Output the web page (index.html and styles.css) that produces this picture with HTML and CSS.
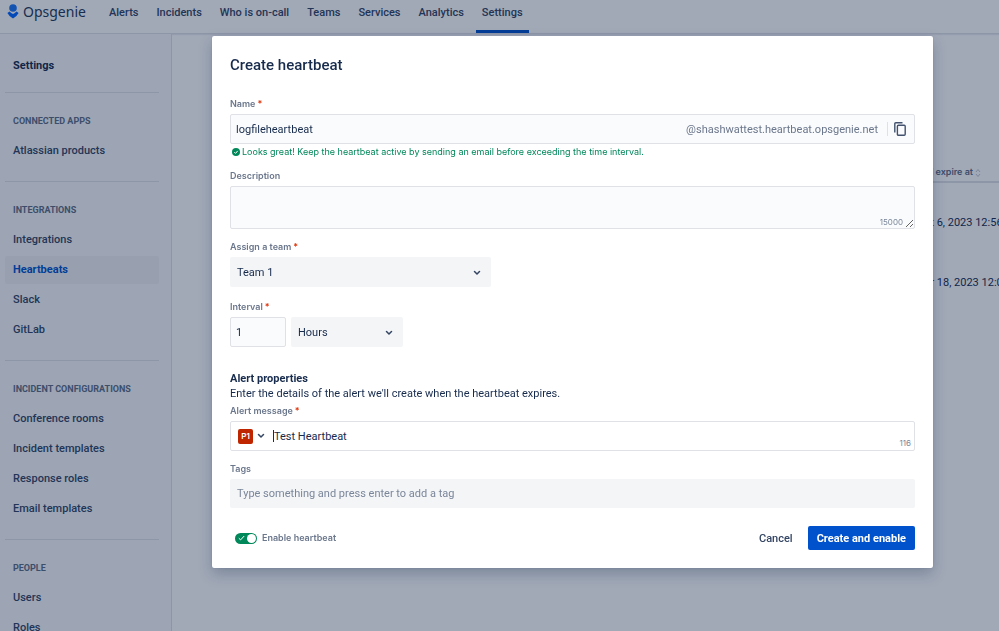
FILE: index.html
```
<!DOCTYPE html>
<html lang="en">
<head>
    <meta charset="UTF-8">
    <meta name="viewport" content="width=device-width, initial-scale=1.0">
    <title>Heartbeats - Opsgenie</title>
    <link rel="stylesheet" href="styles.css">
</head>
<body>
    <header class="topbar">
        <a href="#" class="brand">
            <svg class="brand-icon" viewBox="0 0 12 15" aria-hidden="true">
                <circle cx="6" cy="4" r="3.8" fill="#1d74f5"/>
                <path d="M.4 9 2.600 7.600Q4 9.400 6 10Q8 9.400 9.400 7.600L11.600 9Q9.800 12.600 6 14.400Q2.200 12.600 .4 9Z" fill="#0065ff"/>
            </svg>
            <span>Opsgenie</span>
        </a>
        <nav class="main-nav">
            <a href="#">Alerts</a>
            <a href="#">Incidents</a>
            <a href="#">Who is on-call</a>
            <a href="#">Teams</a>
            <a href="#">Services</a>
            <a href="#">Analytics</a>
            <a href="#" class="active">Settings</a>
        </nav>
    </header>

    <div class="page">
        <aside class="sidebar">
            <h2 class="sidebar-title">Settings</h2>
            <section class="side-section">
                <h3>Connected apps</h3>
                <a href="#">Atlassian products</a>
            </section>
            <section class="side-section">
                <h3>Integrations</h3>
                <a href="#">Integrations</a>
                <a href="#" class="active">Heartbeats</a>
                <a href="#">Slack</a>
                <a href="#">GitLab</a>
            </section>
            <section class="side-section">
                <h3>Incident configurations</h3>
                <a href="#">Conference rooms</a>
                <a href="#">Incident templates</a>
                <a href="#">Response roles</a>
                <a href="#">Email templates</a>
            </section>
            <section class="side-section">
                <h3>People</h3>
                <a href="#">Users</a>
                <a href="#">Roles</a>
            </section>
        </aside>

        <main class="content">
            <table class="heartbeats">
                <thead>
                    <tr>
                        <td class="spacer"></td>
                        <th>Will expire at
                            <svg class="sort-icon" viewBox="0 0 6 10" aria-hidden="true">
                                <path d="M1 4 3 1.500 5 4M1 6 3 8.500 5 6"/>
                            </svg>
                        </th>
                    </tr>
                </thead>
                <tbody>
                    <tr><td></td><td>Oct 6, 2023 12:56</td></tr>
                    <tr><td></td><td>Apr 18, 2023 12:00</td></tr>
                </tbody>
            </table>
        </main>
    </div>

    <div class="blanket">
        <form class="modal" role="dialog" aria-labelledby="modal-title">
            <h1 id="modal-title">Create heartbeat</h1>

            <div class="field">
                <label for="name">Name<span class="required">*</span></label>
                <div class="input-box">
                    <input type="text" id="name" value="logfileheartbeat">
                    <span class="suffix">@shashwattest.heartbeat.opsgenie.net</span>
                    <button type="button" class="copy" aria-label="Copy">
                        <svg viewBox="0 0 12 14" aria-hidden="true">
                            <path d="M.8 10.500V1.800Q.8.800 1.800.800H8.500"/>
                            <rect x="3.400" y="3.300" width="7.800" height="9.900" rx="1"/>
                        </svg>
                    </button>
                </div>
                <p class="success">
                    <svg viewBox="0 0 8 8" aria-hidden="true">
                        <circle cx="4" cy="4" r="4" fill="#00875a"/>
                        <path d="M2.300 4.200 3.500 5.400 5.700 2.900" fill="none" stroke="#fff"/>
                    </svg>
                    Looks great! Keep the heartbeat active by sending an email before exceeding the time interval.
                </p>
            </div>

            <div class="field">
                <label for="description">Description</label>
                <div class="textarea-box">
                    <textarea id="description"></textarea>
                    <span class="counter">15000</span>
                </div>
            </div>

            <div class="field field-spaced">
                <label for="team">Assign a team<span class="required">*</span></label>
                <div class="select-box team">
                    <select id="team"><option>Team 1</option></select>
                    <svg class="chevron" viewBox="0 0 8 6" aria-hidden="true"><path d="M1.500 1.500 4 4 6.500 1.500"/></svg>
                </div>
            </div>

            <div class="field">
                <label for="interval">Interval<span class="required">*</span></label>
                <div class="interval">
                    <div class="input-box interval-value">
                        <input type="text" id="interval" inputmode="numeric" value="1">
                    </div>
                    <div class="select-box unit">
                        <select aria-label="Interval unit"><option>Hours</option></select>
                        <svg class="chevron" viewBox="0 0 8 6" aria-hidden="true"><path d="M1.500 1.500 4 4 6.500 1.500"/></svg>
                    </div>
                </div>
            </div>

            <div class="alert-intro">
                <h2>Alert properties</h2>
                <p>Enter the details of the alert we'll create when the heartbeat expires.</p>
            </div>

            <div class="field">
                <label for="message">Alert message<span class="required">*</span></label>
                <div class="input-box message">
                    <button type="button" class="priority">
                        <span class="badge">P1</span>
                        <svg class="arrow" viewBox="0 0 8 6" aria-hidden="true"><path d="M1.500 1.500 4 4 6.500 1.500"/></svg>
                    </button>
                    <span class="caret"></span>
                    <input type="text" id="message" value="Test Heartbeat">
                    <span class="counter">116</span>
                </div>
            </div>

            <div class="field">
                <label for="tags">Tags</label>
                <input type="text" id="tags" class="tags" placeholder="Type something and press enter to add a tag">
            </div>

            <footer class="modal-footer">
                <div class="toggle">
                    <input type="checkbox" id="enable" checked>
                    <svg viewBox="0 0 7 6" aria-hidden="true"><path d="M.8 3.200 2.600 4.900 6.200 1"/></svg>
                    <label for="enable">Enable heartbeat</label>
                </div>
                <button type="button" class="btn">Cancel</button>
                <button type="submit" class="btn btn-primary">Create and enable</button>
            </footer>
        </form>
    </div>
</body>
</html>
```

FILE: styles.css
```
* {
    margin: 0;
    padding: 0;
    box-sizing: border-box;
}

body {
    height: 100vh;
    display: flex;
    flex-direction: column;
    overflow: hidden;
    background: #fff;
    color: #172b4d;
    font-family: Roboto, "Liberation Sans", sans-serif;
    font-size: 11px;
    line-height: 15px;
}

a {
    color: inherit;
    text-decoration: none;
}

input,
textarea,
select,
button {
    font: inherit;
    color: inherit;
    background: none;
    border: none;
    outline: none;
}

/* top bar */
.topbar {
    flex: none;
    display: flex;
    height: 34px;
    border-bottom: 1px solid #dfe1e6;
    box-shadow: 0 1px 1px #ebecf0;
    line-height: 26px;
    font-weight: 500;
    color: #344563;
}

.brand {
    display: flex;
    width: 103px;
    padding-left: 7px;
    gap: 4px;
    font-family: "Noto Sans", sans-serif;
    font-size: 14px;
    line-height: 24px;
    font-weight: 400;
    color: #253858;
}

.brand-icon {
    width: 12px;
    height: 15px;
    margin-top: 4px;
}

.main-nav {
    display: flex;
    gap: 6px;
}

.main-nav a {
    padding: 0 6px;
    white-space: nowrap;
}

.main-nav .active {
    border-bottom: 3px solid #0052cc;
}

/* sidebar */
.page {
    flex: 1;
    display: flex;
    min-height: 0;
}

.sidebar {
    flex: none;
    width: 172px;
    padding: 24px 12px 0 5px;
    background: #f8f9fb;
    border-right: 1px solid #dfe1e6;
    overflow: hidden;
}

.sidebar-title {
    padding: 0 8px;
    margin-bottom: 19px;
    font-size: 11px;
    font-weight: 700;
}

.side-section {
    border-top: 1px solid #dfe1e6;
    padding: 21px 0 14px;
}

.side-section h3 {
    padding: 0 8px;
    margin-bottom: 9px;
    font-size: 9px;
    line-height: 14px;
    font-weight: 700;
    text-transform: uppercase;
    color: #5e6c84;
}

.side-section a {
    display: block;
    padding: 0 8px;
    margin-bottom: 2px;
    line-height: 28px;
    border-radius: 2px;
    font-weight: 500;
    color: #344563;
}

.side-section .active {
    background: #f0f1f4;
    color: #0052cc;
    font-weight: 700;
}

/* heartbeat list */
.content {
    flex: 1;
    min-width: 0;
    overflow: hidden;
    padding: 128px 0 0 60px;
}

.heartbeats {
    border-collapse: collapse;
    white-space: nowrap;
}

.heartbeats .spacer {
    width: 685px;
    min-width: 685px;
}

.heartbeats thead {
    border-bottom: 2px solid #dfe1e6;
}

.heartbeats th {
    height: 20px;
    font-family: Inter, sans-serif;
    font-size: 9px;
    font-weight: 600;
    text-align: left;
    color: #5e6c84;
}

.heartbeats tbody td {
    height: 60px;
    padding-top: 20px;
}

.sort-icon {
    width: 6px;
    height: 10px;
    vertical-align: middle;
    fill: none;
    stroke: #c1c7d0;
}

/* modal */
.blanket {
    position: fixed;
    inset: 0;
    display: flex;
    align-items: flex-start;
    padding: 36px 66px 0 212px;
    background: rgba(9, 30, 66, 0.38);
}

.modal {
    flex: 1;
    min-width: 0;
    padding: 18px;
    background: #fff;
    border-radius: 2px;
    box-shadow: 0 0 1px rgba(9, 30, 66, 0.3), 0 6px 14px rgba(9, 30, 66, 0.25);
}

.modal h1 {
    margin-bottom: 22px;
    font-size: 15px;
    line-height: 22px;
    font-weight: 500;
}

.field {
    margin-bottom: 12px;
}

.field-spaced {
    margin-bottom: 14px;
}

.field label,
.toggle label {
    display: block;
    font-family: Inter, sans-serif;
    font-size: 9px;
    line-height: 12px;
    font-weight: 600;
    color: #6b778c;
}

.field label {
    margin-bottom: 4px;
}

.required {
    margin-left: 2px;
    color: #de350b;
}

.input-box {
    position: relative;
    display: flex;
    align-items: center;
    height: 30px;
    padding: 0 5px;
    background: #fafbfc;
    border: 1px solid #dfe1e6;
    border-radius: 2px;
}

.input-box input {
    flex: 1;
    min-width: 0;
}

.suffix {
    color: #6b778c;
}

.copy {
    display: flex;
    margin-left: 9px;
    padding-left: 6px;
    border-left: 1px solid #dfe1e6;
}

.copy svg {
    width: 12px;
    height: 14px;
    margin-right: 3px;
    fill: none;
    stroke: #42526e;
    stroke-width: 1.4;
}

.success {
    display: flex;
    align-items: center;
    gap: 2px;
    margin-top: 2px;
    padding-left: 2px;
    font-family: Inter, sans-serif;
    font-size: 9px;
    line-height: 12px;
    font-weight: 400;
    color: #00875a;
}

.success svg {
    flex: none;
    width: 8px;
    height: 8px;
}

.textarea-box {
    position: relative;
}

.textarea-box textarea {
    display: block;
    width: 100%;
    height: 43px;
    padding: 5px;
    background: #fafbfc;
    border: 1px solid #dfe1e6;
    border-radius: 2px;
    resize: vertical;
}

.counter {
    position: absolute;
    right: 3px;
    bottom: 2px;
    font-family: Inter, sans-serif;
    font-size: 8px;
    line-height: 10px;
    color: #7a869a;
}

.textarea-box .counter {
    right: 12px;
}

.select-box {
    position: relative;
}

.select-box select {
    appearance: none;
    display: block;
    width: 100%;
    height: 30px;
    padding: 0 7px;
    background: #f4f5f7;
    border-radius: 2px;
}

.team {
    width: 261px;
}

.unit {
    width: 112px;
}

.chevron,
.arrow {
    width: 8px;
    height: 6px;
    fill: none;
    stroke: #344563;
    stroke-width: 1.5;
    stroke-linecap: round;
    stroke-linejoin: round;
}

.chevron {
    position: absolute;
    top: 13px;
    right: 10px;
    pointer-events: none;
}

.interval {
    display: flex;
    align-items: center;
    gap: 5px;
}

.interval-value {
    width: 56px;
}

.alert-intro {
    margin: 24px 0 4px;
}

.alert-intro h2 {
    font-size: 11px;
    font-weight: 700;
}

.message {
    padding-left: 7px;
    background: #fff;
}

.priority {
    display: flex;
    align-items: center;
    gap: 4px;
    margin-right: 8px;
}

.badge {
    width: 15px;
    border-radius: 2px;
    background: #bf2600;
    color: #fff;
    font-family: Inter, sans-serif;
    font-size: 8px;
    font-weight: 600;
    text-align: center;
}

.caret {
    width: 1px;
    height: 12px;
    background: #172b4d;
}

.tags {
    display: block;
    width: 100%;
    height: 29px;
    padding: 0 7px;
    background: #f4f5f7;
    border-radius: 2px;
}

.tags::placeholder {
    color: #7a869a;
}

.modal-footer {
    display: flex;
    align-items: center;
    margin-top: 18px;
}

.toggle {
    position: relative;
    display: flex;
    align-items: center;
    gap: 5px;
    margin-right: auto;
    padding-left: 5px;
}

.toggle input {
    appearance: none;
    display: flex;
    justify-content: flex-end;
    width: 22px;
    height: 11px;
    padding: 1px;
    border-radius: 6px;
    background: #00875a;
}

.toggle input::before {
    content: '';
    width: 9px;
    height: 9px;
    border-radius: 50%;
    background: #fff;
}

.toggle svg {
    position: absolute;
    left: 8px;
    width: 7px;
    height: 6px;
    fill: none;
    stroke: #fff;
    pointer-events: none;
}

.btn {
    height: 24px;
    padding: 0 9px;
    border-radius: 2px;
    font-weight: 500;
    color: #344563;
}

.btn-primary {
    margin-left: 6px;
    background: #0052cc;
    color: #fff;
    font-weight: 700;
}
```
